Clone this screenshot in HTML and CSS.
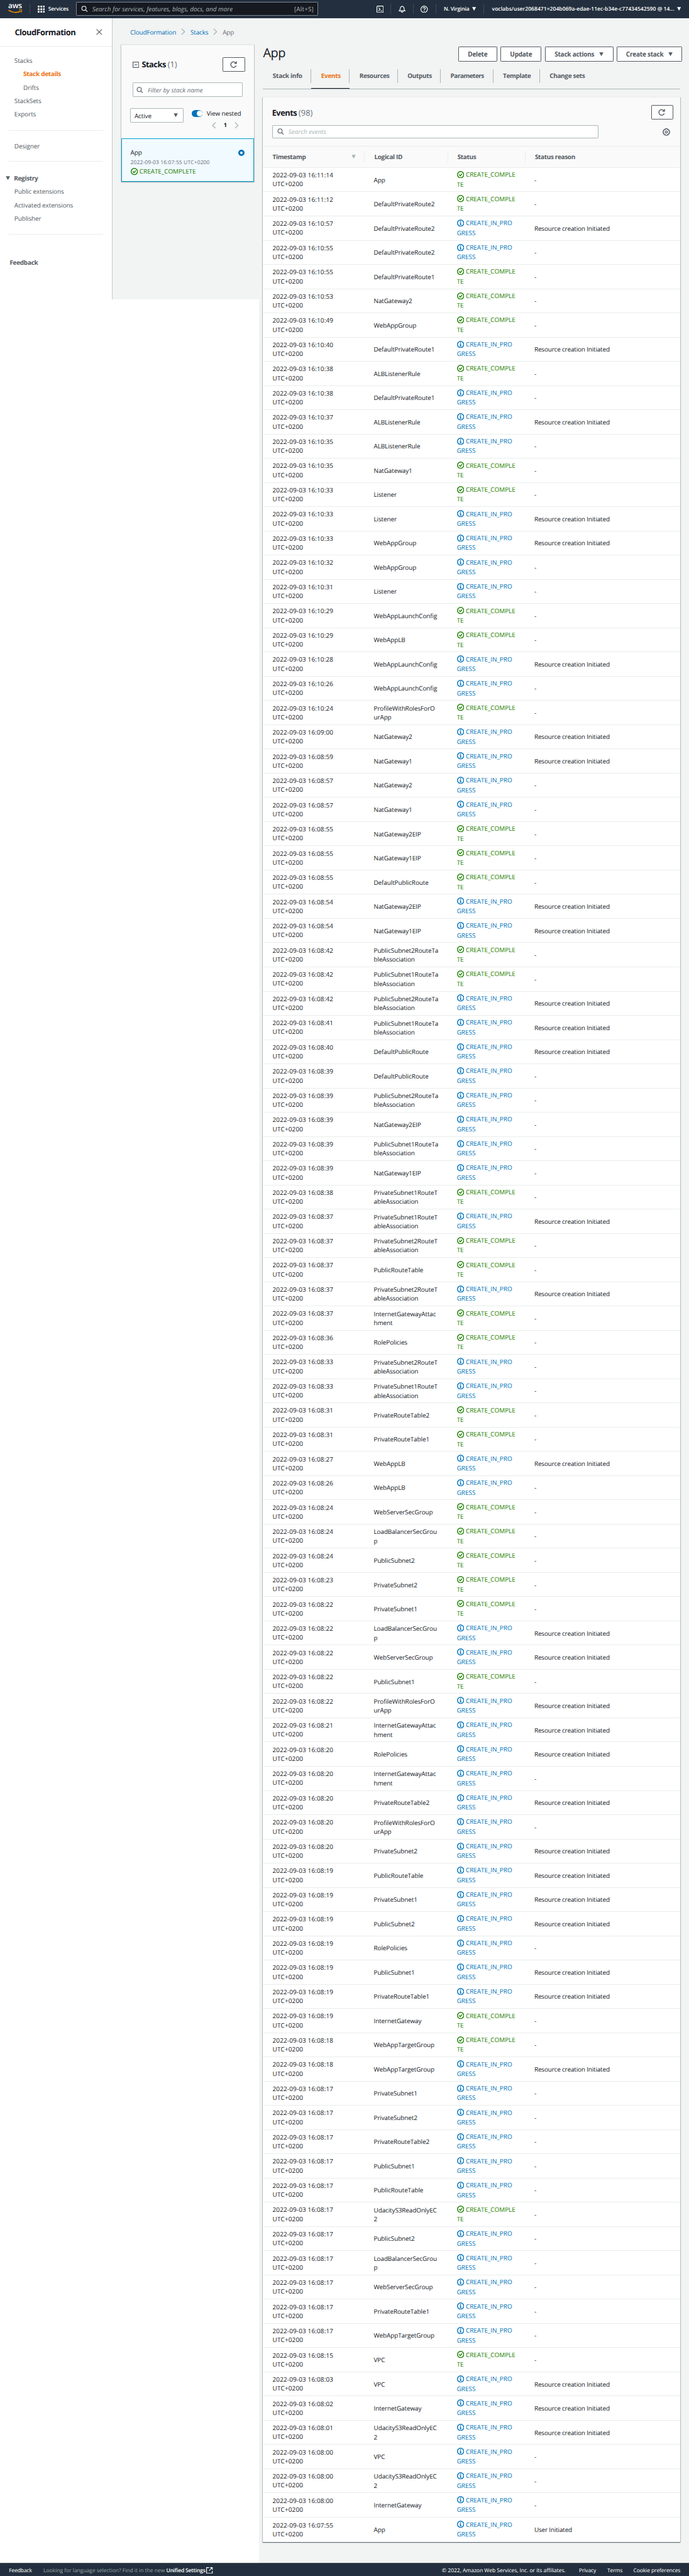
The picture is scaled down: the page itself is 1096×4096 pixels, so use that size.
FILE: index.html
```
<!DOCTYPE html>
<html lang="en">
<head>
<meta charset="utf-8">
<title>CloudFormation - Stack App</title>
<link rel="stylesheet" href="styles.css">
</head>
<body>
<svg class="sprite" aria-hidden="true">
  <symbol id="search" viewBox="0 0 16 16"><circle cx="6.6" cy="6.6" r="5.2" fill="none" stroke="currentColor" stroke-width="2"/><path d="M10.4 10.4 15.2 15.2" stroke="currentColor" stroke-width="2"/></symbol>
  <symbol id="ok" viewBox="0 0 16 16"><circle cx="8" cy="8" r="7" fill="none" stroke="currentColor" stroke-width="2"/><path d="m4.7 7.9 2.6 2.5 4-4.6" fill="none" stroke="currentColor" stroke-width="2"/></symbol>
  <symbol id="info" viewBox="0 0 16 16"><circle cx="8" cy="8" r="7" fill="none" stroke="currentColor" stroke-width="2"/><path d="M7 3.6h2v2H7zM6 6.8h3v3.9h1.1v1.6H5.9v-1.6H7V8.3H6z" fill="currentColor"/></symbol>
  <symbol id="refresh" viewBox="0 0 16 16"><path d="M13.6 10.2A6.2 6.2 0 1 1 13 4.7M14 .8v4.6H9.3" fill="none" stroke="currentColor" stroke-width="2"/></symbol>
  <symbol id="caret" viewBox="0 0 12 12"><path d="M0 .5h12l-6 11z" fill="currentColor"/></symbol>
  <symbol id="right" viewBox="0 0 12 18"><path d="m1.5 1 8.5 8-8.5 8" fill="none" stroke="currentColor" stroke-width="2.4"/></symbol>
  <symbol id="left" viewBox="0 0 12 18"><path d="M10.5 1 2 9l8.5 8" fill="none" stroke="currentColor" stroke-width="2.4"/></symbol>
</svg>

<header class="topbar">
  <a class="logo"><span class="logo-text">aws</span>
    <svg class="smile" viewBox="0 0 40 11"><path d="M1 2c10 7.500 24 8 34 2.500" fill="none" stroke="#ff9900" stroke-width="2.600"/><path d="M30.500 1.500c3-1.200 6.500-1.300 7.500-.4s-.2 4.800-2.600 7.200" fill="none" stroke="#ff9900" stroke-width="2"/></svg>
  </a>
  <a class="services"><svg class="grid-icon" viewBox="0 0 20 20" fill="#fff"><path d="M0 0h5v5H0zM7.500 0h5v5h-5zM15 0h5v5h-5zM0 7.500h5v5H0zM7.500 7.500h5v5h-5zM15 7.500h5v5h-5zM0 15h5v5H0zM7.500 15h5v5h-5zM15 15h5v5h-5z"/></svg>Services</a>
  <div class="global-search"><svg class="i19"><use href="#search"/></svg><span class="ph">Search for services, features, blogs, docs, and more</span><span class="hotkey">[Alt+S]</span></div>
  <a class="tool tool-shell"><svg class="i20" viewBox="0 0 20 20"><rect x="1" y="1" width="18" height="18" rx="2.500" fill="none" stroke="#fff" stroke-width="2"/><path d="m5.500 5.500 4.500 4.500-4.500 4.500M11 14.500h5" fill="none" stroke="#fff" stroke-width="2"/></svg></a>
  <a class="tool"><svg class="i20" viewBox="0 0 20 20"><path d="M1.500 14.300c2.800-1.800 3.300-4 3.300-6.600C4.800 4.400 7 2.200 10 2.200s5.200 2.200 5.200 5.500c0 2.600.5 4.800 3.300 6.600zM10 0v2M7.200 14.500c0 5.400 5.600 5.400 5.600 0" fill="none" stroke="#fff" stroke-width="2"/></svg></a>
  <a class="tool"><svg class="i20" viewBox="0 0 20 20"><circle cx="10" cy="10" r="9" fill="none" stroke="#fff" stroke-width="2"/><path d="M7 8c0-4 6.200-3.800 6.200-.4 0 2.300-3.100 2.300-3.100 4.800M10.100 13.800v2.200" fill="none" stroke="#fff" stroke-width="2"/></svg></a>
  <a class="region">N. Virginia<svg class="i11"><use href="#caret"/></svg></a>
  <a class="account">voclabs/user2068471=204b069a-edae-11ec-b34e-c77434542590 @ 14...<svg class="i11"><use href="#caret"/></svg></a>
</header>

<div class="page">
  <div class="side">
    <div class="viewport">
      <nav class="sidebar">
        <div class="nav-head"><h2>CloudFormation</h2><svg class="close" viewBox="0 0 16 16"><path d="m1 1 14 14M15 1 1 15" stroke="currentColor" stroke-width="2"/></svg></div>
        <ul class="nav first"><li>Stacks</li><li class="sub active">Stack details</li><li class="sub">Drifts</li><li>StackSets</li><li>Exports</li></ul>
        <ul class="nav tight"><li>Designer</li></ul>
        <ul class="nav"><li class="group"><svg class="i12"><use href="#caret"/></svg>Registry</li><li>Public extensions</li><li>Activated extensions</li><li>Publisher</li></ul>
        <div class="nav-feedback">Feedback</div>
      </nav>
      <div class="stacks-col">
        <div class="crumbs"><a>CloudFormation</a><svg class="chev"><use href="#right"/></svg><a>Stacks</a><svg class="chev"><use href="#right"/></svg><span>App</span></div>
        <section class="stacks">
          <div class="stacks-head">
            <svg class="collapse" viewBox="0 0 18 17"><rect x="1" y="1" width="16" height="15" fill="none" stroke="currentColor" stroke-width="2"/><path d="M5 8.500h8" stroke="currentColor" stroke-width="2"/></svg>
            <h2>Stacks <span class="count">(1)</span></h2>
            <button class="btn icon-btn"><svg class="i20"><use href="#refresh"/></svg></button>
          </div>
          <div class="filter"><svg class="i19"><use href="#search"/></svg><span class="ph">Filter by stack name</span></div>
          <div class="controls">
            <div class="select">Active<svg class="i12"><use href="#caret"/></svg></div>
            <div class="nested">
              <div class="toggle-row"><span class="toggle"></span>View nested</div>
              <div class="pager"><svg class="chev"><use href="#left"/></svg><b>1</b><svg class="chev"><use href="#right"/></svg></div>
            </div>
          </div>
          <div class="stack-item">
            <div class="item-top"><span>App</span><span class="radio"></span></div>
            <div class="item-date">2022-09-03 16:07:55 UTC+0200</div>
            <div class="item-status"><svg class="i20"><use href="#ok"/></svg>CREATE_COMPLETE</div>
          </div>
        </section>
      </div>
    </div>
  </div>

  <main class="main">
    <div class="title-row">
      <h1>App</h1>
      <div class="actions">
        <button class="btn delete">Delete</button><button class="btn update">Update</button><button class="btn stack-actions">Stack actions<svg class="i12"><use href="#caret"/></svg></button><button class="btn create">Create stack<svg class="i12"><use href="#caret"/></svg></button>
      </div>
    </div>
    <div class="tabs"><a>Stack info</a><a class="active">Events</a><a>Resources</a><a>Outputs</a><a>Parameters</a><a>Template</a><a>Change sets</a></div>
    <section class="events">
      <div class="events-tools">
        <div class="events-head"><h2>Events <span class="count">(98)</span></h2><button class="btn icon-btn"><svg class="i20"><use href="#refresh"/></svg></button></div>
        <div class="events-search">
          <div class="search-box"><svg class="i19"><use href="#search"/></svg><span class="ph">Search events</span></div>
          <svg class="gear" viewBox="0 0 20 20"><path d="M8 1.200h4l.6 2.300 2.100-.9 2.600 2.700-1 2 2.300.7v4l-2.300.7 1 2.100-2.700 2.600-2-1-.6 2.400H8l-.7-2.400-2.100 1-2.600-2.700 1-2L1.200 12V8l2.400-.7-1-2.100 2.700-2.600 2 .9z" fill="none" stroke="currentColor" stroke-width="2"/><circle cx="10" cy="10" r="2.800" fill="none" stroke="currentColor" stroke-width="2"/></svg>
        </div>
      </div>
      <div class="row head"><div>Timestamp<svg class="i12 sort"><use href="#caret"/></svg></div><div>Logical ID</div><div>Status</div><div>Status reason</div></div>
      <div class="rows" id="rows"></div>
    </section>
  </main>
</div>

<footer class="footer">
  <span class="fb">Feedback</span><span class="lang">Looking for language selection? Find it in the new <b>Unified Settings</b></span>
  <svg class="ext" viewBox="0 0 18 18"><path d="M8 1H1v16h16v-7M11 1h6v6M17 1 8 10" fill="none" stroke="#fff" stroke-width="2"/></svg>
  <span class="copy">© 2022, Amazon Web Services, Inc. or its affiliates.</span><span class="privacy">Privacy</span><span class="terms">Terms</span><span class="cookies">Cookie preferences</span>
</footer>
<script src="events.js"></script>
</body>
</html>
```
FILE: styles.css
```
/* 1rem is ten design pixels */
html { font-size: 5.7083px; }
* { box-sizing: border-box; }
body {
  margin: 0; width: 1096px; height: 4096px; overflow: hidden;
  display: flex; flex-direction: column;
  font-family: "Open Sans", "Noto Sans", sans-serif;
  font-size: 1.75rem; line-height: 2.5rem; letter-spacing: -.012em;
  color: #16191f; background: #fff;
  text-rendering: geometricPrecision;
}
h1, h2, ul { margin: 0; padding: 0; font-weight: 400; list-style: none; }
h2 { font-size: 2.25rem; font-weight: 700; letter-spacing: -.038em; white-space: nowrap; }
.count { font-weight: 400; color: #687078; letter-spacing: 0; }
svg { display: block; flex: none; }
.sprite { position: absolute; width: 0; height: 0; }
.i11 { width: 1.1rem; height: 1.1rem; }
.i12 { width: 1.25rem; height: 1.15rem; }
.i19 { width: 1.9rem; height: 1.8rem; }
.i20 { width: 2rem; height: 2rem; }
.chev { width: 1.2rem; height: 1.9rem; color: #aab7b8; }
.ph { font-style: italic; letter-spacing: 0; white-space: nowrap; }

.btn {
  display: flex; align-items: center; justify-content: center; gap: 1.4rem;
  height: 4.1rem; padding: 0; font: inherit; font-weight: 700; letter-spacing: -.022em;
  color: #545b64; background: #fff; border: 1px solid #545b64; border-radius: .2rem; white-space: nowrap;
}
.icon-btn { width: 6.2rem; }

/* top bar */
.topbar {
  flex: none; display: flex; align-items: center; height: 5.1rem; padding-bottom: .1rem;
  background: #232f3e; color: #fff; font-size: 1.5rem; font-weight: 600; letter-spacing: -.02em;
}
.topbar a { white-space: nowrap; }
.logo { width: 8.35rem; height: 2.8rem; padding-left: 2.2rem; border-right: 1px solid #414c58; }
.logo-text { display: block; height: 1.5rem; line-height: 1rem; font-size: 2.1rem; letter-spacing: -.02em; padding-left: .1rem; }
.smile { width: 4rem; height: 1.1rem; }
.services { display: flex; align-items: center; gap: 1rem; width: 12.85rem; padding-left: 2.1rem; }
.grid-icon { width: 2rem; height: 2rem; }
.global-search {
  display: flex; align-items: center; width: 67.5rem; height: 3.9rem; padding: 0 1.1rem 0 1.25rem;
  border: 1px solid #7b8794; border-radius: .2rem; background: #161920; color: #aab7b8; font-size: 1.75rem; font-weight: 400;
}
.global-search svg { color: #d5dbdb; margin-right: 1.2rem; }
.global-search .ph { letter-spacing: -.0022em; }
.hotkey { margin-left: auto; letter-spacing: .015em; }
.tool { display: flex; align-items: center; justify-content: center; width: 6.25rem; height: 2.8rem; border-right: 1px solid #414c58; }
.tool-shell { width: 5.9rem; margin-left: 14.4rem; padding-right: .1rem; }
.region { display: flex; align-items: center; gap: .7rem; width: 13.4rem; height: 2.8rem; padding-left: 2.2rem; border-right: 1px solid #414c58; letter-spacing: -.022em; }
.account { display: flex; align-items: center; gap: .8rem; padding-left: 2.2rem; letter-spacing: .0035em; }

.page { flex: 1; min-height: 0; display: flex; }
.side { flex: none; width: 72.1rem; }
.viewport { display: flex; height: 78.3rem; background: #f2f3f3; }

/* navigation */
.sidebar { width: 31.4rem; background: #fff; border-right: 1px solid #c3c8c9; color: #545b64; }
.nav-head { display: flex; align-items: center; justify-content: space-between; height: 7.9rem; padding: 0 2.8rem .1rem 4.1rem; border-bottom: 1px solid #eaeded; color: #16191f; }
.close { width: 1.7rem; height: 1.7rem; color: #545b64; }
.nav { margin: 0 2.5rem; padding: 2.6rem 0 2.5rem 1.5rem; border-bottom: 1px solid #eaeded; }
.nav.first { padding-top: 1.9rem; }
.nav.tight { padding-top: 2.4rem; padding-bottom: 2.4rem; }
.nav li { display: flex; align-items: center; height: 3.76rem; }
.nav .sub { padding-left: 2.5rem; }
.nav .active { color: #ec7211; font-weight: 700; letter-spacing: -.027em; }
.nav .group { font-weight: 700; letter-spacing: -.031em; gap: 1rem; margin-left: -2.35rem; }
.nav-feedback { padding: 6.5rem 0 0 2.7rem; font-weight: 700; letter-spacing: -.0275em; }

/* stack list */
.stacks-col { width: 39.5rem; padding-left: 2.4rem; }
.crumbs { display: flex; align-items: center; gap: 1.4rem; height: 7.4rem; padding: .2rem 0 0 2.5rem; letter-spacing: -.016em; color: #687078; }
.crumbs a { color: #0073bb; }
.stacks { width: 37rem; background: #fafafa; border-top: 1px solid #eaeded; box-shadow: 0 1px 1px rgba(0,28,36,.3), 1px 0 1px rgba(0,28,36,.15), -1px 0 1px rgba(0,28,36,.15); }
.stacks-head { display: flex; align-items: center; height: 10.35rem; padding: 0 2.5rem 0 3.2rem; }
.stacks-head .btn { margin-left: auto; margin-top: .3rem; }
.collapse { width: 1.8rem; height: 1.75rem; margin: .5rem .7rem 0 0; color: #545b64; }
.filter, .search-box, .select { display: flex; align-items: center; background: #fff; border: 1px solid #aab7b8; border-radius: .2rem; }
.filter { width: 30.8rem; height: 4rem; margin-left: 3.1rem; padding-left: 1rem; color: #687078; }
.filter svg, .search-box svg { margin-right: 1.2rem; color: #687078; }
.controls { display: flex; height: 11.5rem; padding: 3.1rem 0 0 2.5rem; }
.select { width: 14.8rem; height: 4.1rem; padding: 0 1.4rem 0 1rem; justify-content: space-between; }
.select svg { color: #545b64; }
.nested { padding-left: 2.4rem; }
.toggle-row { display: flex; align-items: center; gap: 1.1rem; height: 2.5rem; margin-top: .1rem; white-space: nowrap; }
.toggle { width: 3rem; height: 2rem; border-radius: 1rem; background: #0073bb; margin-top: .2rem; display: flex; align-items: center; justify-content: flex-end; padding-right: .1rem; }
.toggle::after { content: ""; width: 1.6rem; height: 1.6rem; border-radius: 50%; background: #fff; }
.pager { display: flex; align-items: center; justify-content: space-between; width: 7.6rem; margin: .9rem 0 0 5.5rem; font-size: 1.6rem; }
.stack-item { height: 12.1rem; padding: 2.45rem 2.4rem 0 2.4rem; background: #f1faff; border: 1px solid #00a1c9; }
.item-top { display: flex; justify-content: space-between; align-items: center; }
.radio { width: 1.8rem; height: 1.8rem; border: .55rem solid #0073bb; border-radius: 50%; background: #fff; margin-top: .3rem; }
.item-date { margin-top: .35rem; font-size: 1.5rem; letter-spacing: .0097em; color: #687078; }
.item-status { display: flex; align-items: center; gap: .5rem; letter-spacing: -.005em; color: #1d8102; }
.item-status svg { margin-top: .2rem; }

/* main column */
.main { flex: 1; padding: 7.9rem 2.5rem 0 1.2rem; background: #f2f3f3; }
.title-row { display: flex; justify-content: space-between; align-items: center; height: 4.1rem; }
h1 { font-size: 3.5rem; letter-spacing: -.028em; margin-top: -.6rem; }
.actions { display: flex; gap: 1rem; margin-right: -.6rem; }
.actions .delete { width: 10.8rem; }
.actions .update { width: 11.4rem; }
.actions .stack-actions { width: 19rem; }
.actions .create { width: 18.2rem; }
.tabs { display: flex; height: 7.7rem; padding-top: 2.2rem; border-bottom: 1px solid #aab7b8; font-weight: 700; color: #545b64; letter-spacing: -.032em; }
.tabs a { height: 3.8rem; padding: .55rem 0 0 2.7rem; border-right: 1px solid #aab7b8; }
.tabs a:nth-child(1) { width: 13.5rem; letter-spacing: -.025em; }
.tabs a:nth-child(2) { width: 10.65rem; }
.tabs a:nth-child(3) { width: 13.4rem; }
.tabs a:nth-child(4) { width: 12rem; }
.tabs a:nth-child(5) { width: 14.6rem; letter-spacing: -.05em; }
.tabs a:nth-child(6) { width: 13rem; }
.tabs a:nth-child(7) { border: 0; }
.tabs .active { color: #ec7211; background: linear-gradient(#aab7b8, #aab7b8) right top / 1px 3.8rem no-repeat; border-right: 0; height: 5.4rem; border-bottom: .3rem solid #16191f; }

/* events table */
.events { margin-top: 2.1rem; background: #fff; border-top: 1px solid #eaeded; box-shadow: 0 1px 1px rgba(0,28,36,.4), 1px 1px 1px rgba(0,28,36,.18), -1px 1px 1px rgba(0,28,36,.18); }
.events-tools { height: 13.5rem; background: #fafafa; padding: 2.25rem 0 0 2.5rem; }
.events-head { display: flex; align-items: center; justify-content: space-between; padding-right: 1.9rem; height: 4rem; }
.events-search { display: flex; align-items: center; justify-content: space-between; margin-top: 1.55rem; padding-right: 2.7rem; }
.search-box { width: 91rem; height: 3.7rem; padding-left: 1.3rem; color: #aab7b8; }
.gear { width: 2.1rem; height: 2.1rem; color: #545b64; }
.row { display: grid; grid-template-columns: 28.2rem 23.15rem 21.6rem 1fr; align-items: center; height: 6.7495rem; border-bottom: 1px solid #eaeded; }
.row > div { padding-left: 2.65rem; white-space: nowrap; }
.row:last-child { border-bottom: 0; }
.row.head { height: 6.2rem; background: #fafafa; border-top: 1px solid #eaeded; font-weight: 700; color: #545b64; letter-spacing: -.034em; }
.head > div { display: flex; align-items: center; justify-content: space-between; height: 3rem; padding-right: 2.4rem; }
.head > div + div { border-left: 1px solid #eaeded; }
.sort { color: #aab7b8; }
.time { letter-spacing: .013em; margin-top: -.1rem; }
.status { letter-spacing: -.004em; line-height: 2.7rem; }
.status svg { display: inline-block; vertical-align: -.36rem; margin-right: .5rem; }
.status.complete { color: #1d8102; }
.status.progress { color: #0073bb; }
.reason { letter-spacing: -.0177em; }

.footer {
  flex: none; display: flex; align-items: center; height: 3.6rem; padding: .2rem 2.4rem 0 2.5rem;
  background: #232f3e; border-top: 1px solid #545b64; color: #fff; font-size: 1.5rem; font-weight: 500; white-space: nowrap;
}
.fb { width: 9.6rem; letter-spacing: -.02em; }
.lang { color: #95a5a6; letter-spacing: -.005em; font-weight: 400; }
.lang b { color: #fff; font-weight: 600; letter-spacing: -.022em; }
.ext { width: 1.8rem; height: 1.8rem; margin-left: .3rem; }
.copy { margin-left: auto; letter-spacing: -.006em; }
.privacy { margin-left: 3.7rem; }
.terms { margin-left: 3.1rem; }
.cookies { margin-left: 3rem; }
```
FILE: events.js
```
// time | logical ID lines | C = complete, P = in progress | reason (R = resource creation initiated)
const pub = n => `PublicSubnet${n}RouteTa/bleAssociation`;
const priv = n => `PrivateSubnet${n}RouteT/ableAssociation`;
const attach = "InternetGatewayAttac/hment";
const profile = "ProfileWithRolesForO/urApp";
const balancer = "LoadBalancerSecGrou/p";
const udacity = "UdacityS3ReadOnlyEC/2";
const events = `
11:14|App|C
11:12|DefaultPrivateRoute2|C
10:57|DefaultPrivateRoute2|P|R
10:55|DefaultPrivateRoute2|P
10:55|DefaultPrivateRoute1|C
10:53|NatGateway2|C
10:49|WebAppGroup|C
10:40|DefaultPrivateRoute1|P|R
10:38|ALBListenerRule|C
10:38|DefaultPrivateRoute1|P
10:37|ALBListenerRule|P|R
10:35|ALBListenerRule|P
10:35|NatGateway1|C
10:33|Listener|C
10:33|Listener|P|R
10:33|WebAppGroup|P|R
10:32|WebAppGroup|P
10:31|Listener|P
10:29|WebAppLaunchConfig|C
10:29|WebAppLB|C
10:28|WebAppLaunchConfig|P|R
10:26|WebAppLaunchConfig|P
10:24|${profile}|C
09:00|NatGateway2|P|R
08:59|NatGateway1|P|R
08:57|NatGateway2|P
08:57|NatGateway1|P
08:55|NatGateway2EIP|C
08:55|NatGateway1EIP|C
08:55|DefaultPublicRoute|C
08:54|NatGateway2EIP|P|R
08:54|NatGateway1EIP|P|R
08:42|${pub(2)}|C
08:42|${pub(1)}|C
08:42|${pub(2)}|P|R
08:41|${pub(1)}|P|R
08:40|DefaultPublicRoute|P|R
08:39|DefaultPublicRoute|P
08:39|${pub(2)}|P
08:39|NatGateway2EIP|P
08:39|${pub(1)}|P
08:39|NatGateway1EIP|P
08:38|${priv(1)}|C
08:37|${priv(1)}|P|R
08:37|${priv(2)}|C
08:37|PublicRouteTable|C
08:37|${priv(2)}|P|R
08:37|${attach}|C
08:36|RolePolicies|C
08:33|${priv(2)}|P
08:33|${priv(1)}|P
08:31|PrivateRouteTable2|C
08:31|PrivateRouteTable1|C
08:27|WebAppLB|P|R
08:26|WebAppLB|P
08:24|WebServerSecGroup|C
08:24|${balancer}|C
08:24|PublicSubnet2|C
08:23|PrivateSubnet2|C
08:22|PrivateSubnet1|C
08:22|${balancer}|P|R
08:22|WebServerSecGroup|P|R
08:22|PublicSubnet1|C
08:22|${profile}|P|R
08:21|${attach}|P|R
08:20|RolePolicies|P|R
08:20|${attach}|P
08:20|PrivateRouteTable2|P|R
08:20|${profile}|P
08:20|PrivateSubnet2|P|R
08:19|PublicRouteTable|P|R
08:19|PrivateSubnet1|P|R
08:19|PublicSubnet2|P|R
08:19|RolePolicies|P
08:19|PublicSubnet1|P|R
08:19|PrivateRouteTable1|P|R
08:19|InternetGateway|C
08:18|WebAppTargetGroup|C
08:18|WebAppTargetGroup|P|R
08:17|PrivateSubnet1|P
08:17|PrivateSubnet2|P
08:17|PrivateRouteTable2|P
08:17|PublicSubnet1|P
08:17|PublicRouteTable|P
08:17|${udacity}|C
08:17|PublicSubnet2|P
08:17|${balancer}|P
08:17|WebServerSecGroup|P
08:17|PrivateRouteTable1|P
08:17|WebAppTargetGroup|P
08:15|VPC|C
08:03|VPC|P|R
08:02|InternetGateway|P|R
08:01|${udacity}|P|R
08:00|VPC|P
08:00|${udacity}|P
08:00|InternetGateway|P
07:55|App|P|User Initiated`.trim().split("\n");

const states = {
  C: ["complete", "ok", "CREATE_COMPLE<br>TE"],
  P: ["progress", "info", "CREATE_IN_PRO<br>GRESS"],
};
document.getElementById("rows").innerHTML = events.map(line => {
  const [time, id, state, reason] = line.split("|");
  const [cls, icon, label] = states[state];
  const why = reason === "R" ? "Resource creation Initiated" : reason || "-";
  return `<div class="row"><div class="time">2022-09-03 16:${time}<br>UTC+0200</div>` +
    `<div>${id.replace("/", "<br>")}</div>` +
    `<div class="status ${cls}"><svg class="i20"><use href="#${icon}"/></svg>${label}</div>` +
    `<div class="reason">${why}</div></div>`;
}).join("");
```
